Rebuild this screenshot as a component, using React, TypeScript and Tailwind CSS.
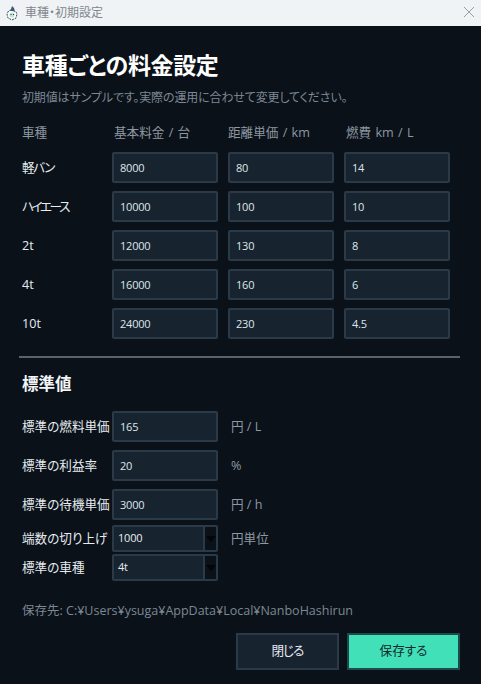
const font = { fontFamily: '"Open Sans", "Noto Sans CJK JP", sans-serif' };

const rates = [
  { name: '軽バン', nameClass: 'tracking-[-1.5px]', base: '8000', dist: '80', fuel: '14' },
  { name: 'ハイエース', nameClass: 'tracking-[-2.4px]', base: '10000', dist: '100', fuel: '10' },
  { name: '2t', nameClass: '', base: '12000', dist: '130', fuel: '8' },
  { name: '4t', nameClass: '', base: '16000', dist: '160', fuel: '6' },
  { name: '10t', nameClass: '', base: '24000', dist: '230', fuel: '4.5' },
];

const standards = [
  { label: '標準の燃料単価', value: '165', unit: '円 / L' },
  { label: '標準の利益率', value: '20', unit: '%' },
  { label: '標準の待機単価', value: '3000', unit: '円 / h' },
];

function Field({ value }: { value: string }) {
  return (
    <input
      readOnly
      value={value}
      className="w-[106px] h-[31px] shrink-0 bg-[#17232f] border-2 border-[#2a3a48] rounded-[2px] pl-[6px] text-[11px] tracking-[-0.2px] text-[#dfe6ec] outline-none"
    />
  );
}

function Combo({ value }: { value: string }) {
  return (
    <div className="w-[106px] h-[27px] shrink-0 flex border-2 border-[#2a3a48] rounded-[2px] bg-[#17232f]">
      <span className="flex-1 flex items-center pl-[4px] text-[11px] tracking-[-0.2px] text-[#e6ecf1]">{value}</span>
      <span className="w-[11px] ml-[1px] bg-[#0b1118] border-l-2 border-[#2a3a48] box-content flex items-center justify-center">
        <span className="w-0 h-0 border-x-[5px] border-x-transparent border-t-[6px] border-t-[#02060a]" />
      </span>
    </div>
  );
}

function AppIcon() {
  return (
    <svg width="14" height="16" viewBox="0 0 14 16" className="ml-[5px]">
      <path d="M3.5 6 L2 9 L3 13 L7 15 L11 13 L12 9 L10.5 6" fill="#ffffff" stroke="#33475c" strokeWidth="1" strokeDasharray="2 1" />
      <path d="M4 6 L6 4 L7 1 L9 3 L9.5 5 L10.5 7 L7 6 Z" fill="#3a5a7a" />
      <circle cx="7" cy="10" r="2.6" fill="#bfe8cf" />
      <rect x="5.5" y="9" width="1" height="1" fill="#23384d" />
      <rect x="8" y="9" width="1" height="1" fill="#23384d" />
    </svg>
  );
}

export default function App() {
  return (
    <div style={font} className="w-[481px] h-[684px] bg-[#0b1118] flex flex-col overflow-hidden [font-feature-settings:'palt']">
      <div className="h-[26px] shrink-0 bg-[#f0f3f6] flex items-center">
        <AppIcon />
        <span className="ml-[6px] text-xs text-[#80868c]">車種・初期設定</span>
        <svg width="12" height="12" viewBox="0 0 12 12" className="ml-auto mr-[6px] mb-[2px]">
          <path d="M1 1 L11 11 M11 1 L1 11" stroke="#9a9ea3" strokeWidth="1" />
        </svg>
      </div>

      <div className="flex-1 flex flex-col pl-[22px] pr-[21px]">
        <h1 className="mt-[22px] h-[34px] leading-[34px] text-[23px] tracking-[-0.35px] font-semibold text-white">車種ごとの料金設定</h1>
        <p className="mt-[7px] h-[18px] leading-[18px] text-xs tracking-[-0.13px] text-[#7c8894]">初期値はサンプルです。実際の運用に合わせて変更してください。</p>

        <div className="mt-[17px] h-[18px] flex items-center text-[12.6px] [word-spacing:1px] text-[#8d98a3]">
          <span className="w-[92px]">車種</span>
          <span className="w-[114px]">基本料金 / 台</span>
          <span className="w-[118px]">距離単価 / km</span>
          <span>燃費 km / L</span>
        </div>

        <div className="mt-[10px] flex flex-col gap-[8px]">
          {rates.map((r) => (
            <div key={r.name} className="flex items-center">
              <span className={`w-[90px] pt-[1px] text-[12.6px] text-[#e6ecf1] ${r.nameClass}`}>{r.name}</span>
              <div className="flex gap-[10px]">
                <Field value={r.base} />
                <Field value={r.dist} />
                <Field value={r.fuel} />
              </div>
            </div>
          ))}
        </div>

        <div className="mt-[17px] -ml-[3px] w-[441px] h-[2px] bg-[#5b6369]" />

        <h2 className="mt-[15px] h-[22px] leading-[22px] text-[16.5px] font-semibold text-[#f2f5f7]">標準値</h2>

        <div className="mt-[16px] flex flex-col gap-[8px]">
          {standards.map((s) => (
            <div key={s.label} className="flex items-center">
              <span className="w-[90px] pt-[1px] whitespace-nowrap text-[12.6px] text-[#e6ecf1]">{s.label}</span>
              <Field value={s.value} />
              <span className="ml-[13px] pt-[2px] text-[12.6px] text-[#8d98a3]">{s.unit}</span>
            </div>
          ))}
        </div>

        <div className="mt-[5px] flex items-center">
          <span className="w-[90px] pt-[1px] text-[12.6px] text-[#e6ecf1]">端数の切り上げ</span>
          <Combo value="1000" />
          <span className="ml-[13px] pt-[2px] text-[12.6px] text-[#8d98a3]">円単位</span>
        </div>
        <div className="mt-[2px] flex items-center">
          <span className="w-[90px] pt-[1px] text-[12.6px] text-[#e6ecf1]">標準の車種</span>
          <Combo value="4t" />
        </div>

        <p className="mt-[21px] h-[18px] leading-[18px] text-[12.5px] text-[#7c8894]">保存先: C:¥Users¥ysuga¥AppData¥Local¥NanboHashirun</p>

        <div className="mt-[13px] flex justify-end gap-[8px]">
          <button className="w-[103px] h-[37px] bg-[#17232f] border-2 border-[#2a3a48] text-[12.6px] tracking-[-1px] text-[#e6ecf1]">閉じる</button>
          <button className="w-[113px] h-[37px] bg-[#42e0b8] border-2 border-[#1d4a4c] text-[12.6px] text-[#0f2a2c]">保存する</button>
        </div>
      </div>
    </div>
  );
}
